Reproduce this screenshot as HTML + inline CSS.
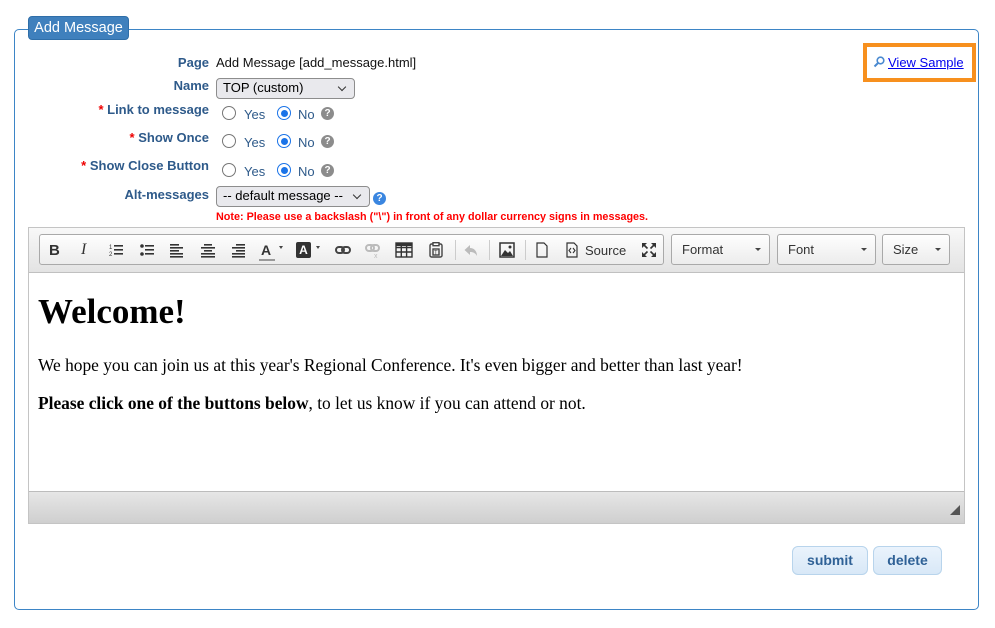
<!DOCTYPE html>
<html><head><meta charset="utf-8"><style>
*{box-sizing:border-box;margin:0;padding:0}
body{width:995px;height:628px;background:#fff;font-family:"Liberation Sans",Arial,sans-serif;position:relative;overflow:hidden}
.a{position:absolute}
.fs{left:14px;top:29px;width:965px;height:581px;border:1px solid #3d85c6;border-radius:5px}
.legend{left:28px;top:16px;width:101px;height:24px;background:#3f80bd;border:1px solid #2f6ea8;border-radius:4px;color:#fff;font-size:14.5px;line-height:23px;text-align:center}
.lab{right:786px;font-size:13px;font-weight:bold;color:#2e5a8a;text-align:right;white-space:nowrap}
.lab b{color:#e00}
.val{left:216px;font-size:13px;color:#111}
.sel{background:#e9e9ed;border:1px solid #8d8d8d;border-radius:4px;font-size:13px;color:#000;padding-left:6px;line-height:18px;height:21px}
.sel:after{content:"";position:absolute;right:9px;top:5px;width:5px;height:5px;border-right:1.5px solid #333;border-bottom:1.5px solid #333;transform:rotate(45deg)}
.rad{width:14px;height:14px;border-radius:50%;border:1px solid #767676;background:#fff}
.rad.on{border:1.5px solid #1a73e8}
.rad.on:after{content:"";position:absolute;left:2.5px;top:2.5px;width:7px;height:7px;border-radius:50%;background:#1a73e8}
.rt{font-size:13px;color:#2e5a8a}
.q{width:13px;height:13px;border-radius:50%;background:#8c8c8c;color:#fff;font-size:10px;font-weight:bold;text-align:center;line-height:13px}
.ed{left:28px;top:227px;width:937px;height:297px;border:1px solid #c4c4c4}
.tb{left:0;top:0;width:935px;height:45px;background:linear-gradient(#f8f8f8,#e3e3e3);border-bottom:1px solid #c0c0c0}
.grp{top:6px;height:31px;border:1px solid #a9a9a9;border-radius:3px;background:linear-gradient(#fefefe,#ececec)}
.cmb{font-size:13px;color:#333;line-height:29px;padding-left:10px}
.cmb:after{content:"";position:absolute;right:8px;top:13px;border:3px solid transparent;border-top:3px solid #444}
svg.i{position:absolute;top:14px;width:16px;height:16px}
</style></head><body>
<div class="a fs"></div>
<div class="a legend">Add Message</div>

<div class="a lab" style="top:55px">Page</div>
<div class="a val" style="top:55px">Add Message [add_message.html]</div>
<div class="a lab" style="top:78px">Name</div>
<div class="a sel" style="left:216px;top:78px;width:139px">TOP (custom)</div>

<div class="a lab" style="top:102px"><b>*</b> Link to message</div>
<div class="a lab" style="top:130px"><b>*</b> Show Once</div>
<div class="a lab" style="top:158px"><b>*</b> Show Close Button</div>

<div class="a rad" style="left:222px;top:106px"></div><div class="a rt" style="left:244px;top:107px">Yes</div>
<div class="a rad on" style="left:277px;top:106px"></div><div class="a rt" style="left:298px;top:107px">No</div><div class="a q" style="left:321px;top:107px">?</div>
<div class="a rad" style="left:222px;top:134px"></div><div class="a rt" style="left:244px;top:135px">Yes</div>
<div class="a rad on" style="left:277px;top:134px"></div><div class="a rt" style="left:298px;top:135px">No</div><div class="a q" style="left:321px;top:135px">?</div>
<div class="a rad" style="left:222px;top:163px"></div><div class="a rt" style="left:244px;top:164px">Yes</div>
<div class="a rad on" style="left:277px;top:163px"></div><div class="a rt" style="left:298px;top:164px">No</div><div class="a q" style="left:321px;top:164px">?</div>

<div class="a lab" style="top:187px">Alt-messages</div>
<div class="a sel" style="left:216px;top:186px;width:154px">-- default message --</div>
<div class="a q" style="left:373px;top:192px;background:#3a86e0">?</div>
<div class="a" style="left:216px;top:211px;font-size:10.8px;font-weight:bold;color:#f00;white-space:nowrap">Note: Please use a backslash ("\") in front of any dollar currency signs in messages.</div>

<div class="a" style="left:863px;top:43px;width:113px;height:39px;border:4px solid #f7901e"></div>
<svg class="a" style="left:873px;top:56px" width="12" height="12" viewBox="0 0 12 12"><circle cx="7.5" cy="4.5" r="3.3" fill="none" stroke="#4a8ad0" stroke-width="1.6"/><path d="M5 7L1.5 10.5" stroke="#4a8ad0" stroke-width="2"/></svg>
<div class="a" style="left:888px;top:55px;font-size:13px;color:#00e;text-decoration:underline">View Sample</div>

<div class="a ed">
 <div class="a tb">
  <div class="a grp" style="left:10px;width:625px"></div>
  <div class="a" style="left:20px;top:14px;font-size:15px;font-weight:bold;color:#333">B</div>
  <div class="a" style="left:52px;top:13px;font-size:16px;font-style:italic;font-family:'Liberation Serif';color:#333">I</div>
  <svg class="i" style="left:79px" viewBox="0 0 16 16"><g fill="#333"><rect x="6" y="3" width="9" height="1.6"/><rect x="6" y="7" width="9" height="1.6"/><rect x="6" y="11" width="9" height="1.6"/><text x="1" y="7" font-size="6" font-family="Liberation Sans">1</text><text x="1" y="14" font-size="6" font-family="Liberation Sans">2</text></g></svg>
  <svg class="i" style="left:110px" viewBox="0 0 16 16"><g fill="#333"><rect x="6" y="3" width="9" height="1.6"/><rect x="6" y="7" width="9" height="1.6"/><rect x="6" y="11" width="9" height="1.6"/><circle cx="3" cy="4" r="1.8"/><circle cx="3" cy="12" r="1.8"/></g></svg>
  <svg class="i" style="left:140px" viewBox="0 0 16 16"><g fill="#333"><rect x="1" y="2" width="9" height="1.6"/><rect x="1" y="5" width="13" height="1.6"/><rect x="1" y="8" width="9" height="1.6"/><rect x="1" y="11" width="13" height="1.6"/><rect x="1" y="14" width="13" height="1.6"/></g></svg>
  <svg class="i" style="left:171px" viewBox="0 0 16 16"><g fill="#333"><rect x="4" y="2" width="8" height="1.6"/><rect x="1" y="5" width="14" height="1.6"/><rect x="4" y="8" width="8" height="1.6"/><rect x="1" y="11" width="14" height="1.6"/><rect x="1" y="14" width="14" height="1.6"/></g></svg>
  <svg class="i" style="left:201px" viewBox="0 0 16 16"><g fill="#333"><rect x="6" y="2" width="9" height="1.6"/><rect x="2" y="5" width="13" height="1.6"/><rect x="6" y="8" width="9" height="1.6"/><rect x="2" y="11" width="13" height="1.6"/><rect x="2" y="14" width="13" height="1.6"/></g></svg>
  <div class="a" style="left:232px;top:14px;font-size:14px;font-weight:bold;color:#333">A</div>
  <div class="a" style="left:230px;top:31px;width:16px;height:2px;background:#999"></div>
  <div class="a" style="left:250px;top:18px;border:2.5px solid transparent;border-top:3px solid #444"></div>
  <div class="a" style="left:267px;top:14px;width:15px;height:16px;background:#333;color:#fff;font-size:12px;font-weight:bold;text-align:center;line-height:16px;border-radius:2px">A</div>
  <div class="a" style="left:287px;top:18px;border:2.5px solid transparent;border-top:3px solid #444"></div>
  <svg class="i" style="left:306px" viewBox="0 0 16 16"><g fill="none" stroke="#444" stroke-width="2"><rect x="1" y="5" width="8" height="6" rx="3"/><rect x="7" y="5" width="8" height="6" rx="3"/></g></svg>
  <svg class="i" style="left:336px" viewBox="0 0 16 16"><g fill="none" stroke="#bbb" stroke-width="2"><rect x="1" y="3" width="8" height="6" rx="3"/><rect x="6" y="3" width="8" height="6" rx="3"/></g><text x="9" y="16" font-size="7" fill="#bbb" font-family="Liberation Sans">x</text></svg>
  <svg class="a" style="left:366px;top:14px" width="18" height="16" viewBox="0 0 18 16"><g fill="none" stroke="#333" stroke-width="1.4"><rect x="1" y="1" width="16" height="14"/><path d="M1 5.5H17M1 10H17M6.3 1V15M11.6 1V15"/></g><rect x="1" y="1" width="16" height="3" fill="#333"/></svg>
  <svg class="i" style="left:399px" viewBox="0 0 16 16"><g fill="none" stroke="#444" stroke-width="1.4"><rect x="2" y="2" width="12" height="13" rx="1.5"/><rect x="5" y="0.7" width="6" height="3" fill="#fff"/><rect x="5" y="7" width="6" height="6"/></g><text x="6" y="12.5" font-size="6" fill="#444" font-family="Liberation Sans">T</text></svg>
  <div class="a" style="left:426px;top:12px;width:1px;height:20px;background:#ccc"></div>
  <svg class="i" style="left:434px" viewBox="0 0 16 16"><path d="M7 3L1.5 8L7 13V10C10 10 12.5 11 14 14C14 9 11 6 7 6Z" fill="#bbb"/></svg>
  <div class="a" style="left:460px;top:12px;width:1px;height:20px;background:#ccc"></div>
  <svg class="i" style="left:470px" viewBox="0 0 16 16"><rect x="1" y="1" width="14" height="14" fill="none" stroke="#333" stroke-width="1.5"/><path d="M2 14L6 8L9 11L11 9L14 14Z" fill="#333"/><circle cx="11" cy="5" r="1.5" fill="#333"/></svg>
  <div class="a" style="left:496px;top:12px;width:1px;height:20px;background:#ccc"></div>
  <svg class="i" style="left:505px" viewBox="0 0 16 16"><path d="M3 1H10L13 4V15H3Z" fill="none" stroke="#333" stroke-width="1.2"/></svg>
  <svg class="i" style="left:535px" viewBox="0 0 16 16"><path d="M3 1H10L13 4V15H3Z" fill="none" stroke="#333" stroke-width="1.2"/><path d="M7 6L5 8.5L7 11M9 6L11 8.5L9 11" fill="none" stroke="#333" stroke-width="1.1"/></svg>
  <div class="a" style="left:556px;top:15px;font-size:13px;color:#333">Source</div>
  <svg class="i" style="left:612px" viewBox="0 0 16 16"><g fill="#333"><path d="M1 1H6L1 6ZM15 1V6L10 1ZM1 15V10L6 15ZM15 15H10L15 10Z"/></g><path d="M3 3L6.5 6.5M13 3L9.5 6.5M3 13L6.5 9.5M13 13L9.5 9.5" stroke="#333" stroke-width="1.6"/></svg>
  <div class="a grp cmb" style="left:642px;width:99px">Format</div>
  <div class="a grp cmb" style="left:748px;width:99px">Font</div>
  <div class="a grp cmb" style="left:853px;width:68px">Size</div>
 </div>
 <div class="a" style="left:0;top:45px;width:935px;height:218px;background:#fff;font-family:'Liberation Serif',serif;color:#000">
  <div class="a" style="left:9px;top:19px;font-size:35px;font-weight:bold">Welcome!</div>
  <div class="a" style="left:9px;top:82px;font-size:17.4px;white-space:nowrap">We hope you can join us at this year's Regional Conference. It's even bigger and better than last year!</div>
  <div class="a" style="left:9px;top:120px;font-size:17.4px;white-space:nowrap"><b>Please click one of the buttons below</b>, to let us know if you can attend or not.</div>
 </div>
 <div class="a" style="left:0;top:263px;width:935px;height:32px;background:linear-gradient(#e6e6e6,#cfcfcf);border-top:1px solid #bcbcbc"></div>
 <div class="a" style="left:921px;top:277px;width:0;height:0;border-left:10px solid transparent;border-bottom:10px solid #555"></div>
</div>

<div class="a" style="left:792px;top:546px;width:76px;height:29px;border:1px solid #b8d4ec;border-radius:6px;background:linear-gradient(#eaf3fc,#d8e8f7);color:#2f6196;font-weight:bold;font-size:14px;text-align:center;line-height:27px">submit</div>
<div class="a" style="left:873px;top:546px;width:69px;height:29px;border:1px solid #b8d4ec;border-radius:6px;background:linear-gradient(#eaf3fc,#d8e8f7);color:#2f6196;font-weight:bold;font-size:14px;text-align:center;line-height:27px">delete</div>
</body></html>
